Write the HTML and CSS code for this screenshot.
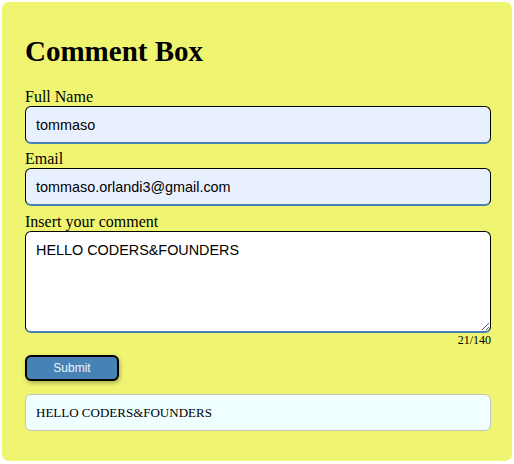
FILE: index.html
```html
<!DOCTYPE html>
<html>
<head>
<meta charset="utf-8">
<link rel="stylesheet" href="styles.css">
</head>
<body>
<div class="card">
  <h1 class="title">Comment Box</h1>
  <form class="form">
    <label class="label">Full Name</label>
    <input class="field" type="text" value="tommaso">
    <label class="label">Email</label>
    <input class="field" type="text" value="tommaso.orlandi3@gmail.com">
    <label class="label label-gap">Insert your comment</label>
    <textarea class="field area">HELLO CODERS&amp;FOUNDERS</textarea>
    <div class="counter">21/140</div>
    <div class="actions"><button class="submit" type="button">Submit</button></div>
  </form>
  <div class="output">HELLO CODERS&amp;FOUNDERS</div>
</div>
</body>
</html>
```
FILE: styles.css
```css
html, body {
  margin: 0;
  background: #ffffff;
}
body {
  padding: 2px;
  font-family: "Liberation Serif", "Times New Roman", serif;
  color: #000;
}
.card {
  background: #f0f571;
  border-radius: 7px;
  height: 459px;
  box-sizing: border-box;
  padding: 13px 21px 0 23px;
  width: 510px;
}
.title {
  font-size: 29px;
  font-weight: bold;
  margin: 20px 0 20px 0;
}
.form {
  display: flex;
  flex-direction: column;
}
.label {
  font-size: 16px;
  line-height: 18px;
}
.label-gap {
  margin-top: 1px;
}
.field {
  box-sizing: border-box;
  width: 100%;
  height: 38px;
  margin: 0 0 6px 0;
  padding: 0 10px;
  border: 1px solid #000;
  border-bottom: 2px solid #4682b4;
  border-radius: 6px;
  background: #e8f0fe;
  font-family: "Liberation Sans", Arial, sans-serif;
  font-size: 14.4px;
  color: #000;
  outline: none;
}
.area {
  height: 102px;
  margin: 0;
  padding: 10px;
  background: #ffffff;
  resize: vertical;
}
.counter {
  text-align: right;
  font-size: 12px;
  line-height: 14px;
}
.actions {
  margin-top: 8px;
}
.submit {
  width: 94px;
  height: 26px;
  background: #4682b4;
  color: #eef3fb;
  border: 2px solid #000;
  border-radius: 6px;
  box-shadow: 1px 2px 4px rgba(0,0,0,0.3);
  font-family: "Liberation Sans", Arial, sans-serif;
  font-size: 12px;
  padding: 0;
}
.output {
  margin-top: 13px;
  box-sizing: border-box;
  height: 37px;
  background: #f0ffff;
  border: 1px solid #c4c4c4;
  border-radius: 6px;
  padding: 0 10px;
  display: flex;
  align-items: center;
  font-size: 13px;
}
```
